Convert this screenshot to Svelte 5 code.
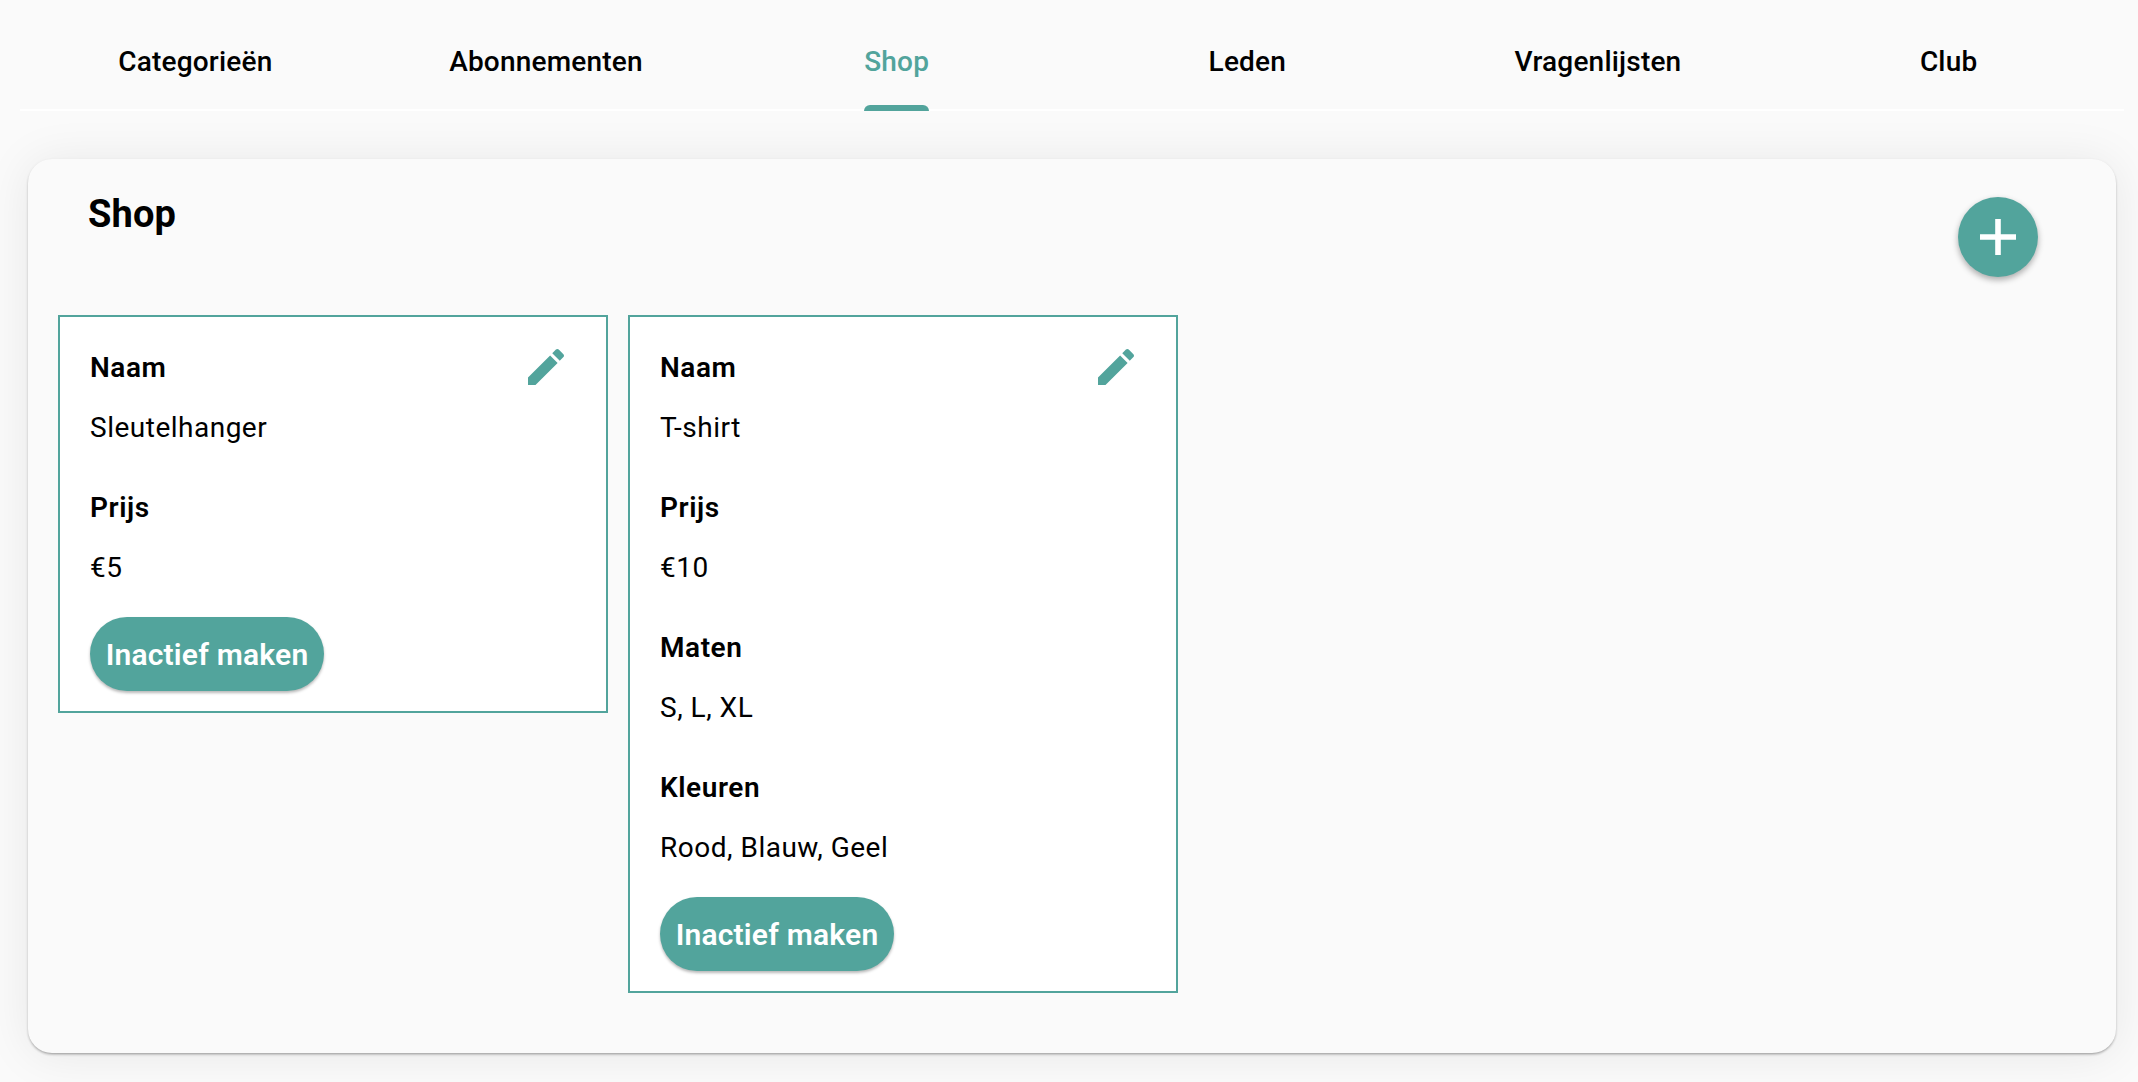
<script lang="ts">
  const tabs = ['Categorieën', 'Abonnementen', 'Shop', 'Leden', 'Vragenlijsten', 'Club'];
  let active = $state('Shop');

  const products = [
    {
      fields: [
        { label: 'Naam', value: 'Sleutelhanger' },
        { label: 'Prijs', value: '€5' },
      ],
    },
    {
      fields: [
        { label: 'Naam', value: 'T-shirt' },
        { label: 'Prijs', value: '€10' },
        { label: 'Maten', value: 'S, L, XL' },
        { label: 'Kleuren', value: 'Rood, Blauw, Geel' },
      ],
    },
  ];
</script>

<div class="page">
  <nav class="tabs">
    {#each tabs as tab}
      <button class="tab" class:active={tab === active} onclick={() => (active = tab)}>
        <span>{tab}</span>
      </button>
    {/each}
  </nav>

  <main class="panel">
    <header class="head">
      <h1>Shop</h1>
      <button class="add" aria-label="Toevoegen">
        <svg viewBox="0 0 36 36"><path d="M15.2 0h5.6v15.2H36v5.6H20.8V36h-5.6V20.8H0v-5.6h15.2z" /></svg>
      </button>
    </header>

    <div class="products">
      {#each products as product}
        <article class="card">
          <button class="edit" aria-label="Bewerken">
            <svg viewBox="0 0 24 24">
              <path d="M3 17.25V21h3.75L17.81 9.94l-3.75-3.75L3 17.25zM20.71 7.04c.39-.39.39-1.02 0-1.41l-2.34-2.34c-.39-.39-1.02-.39-1.41 0l-1.83 1.83 3.75 3.75 1.83-1.83z" />
            </svg>
          </button>
          <dl>
            {#each product.fields as field}
              <div class="field">
                <dt>{field.label}</dt>
                <dd>{field.value}</dd>
              </div>
            {/each}
          </dl>
          <button class="toggle">Inactief maken</button>
        </article>
      {/each}
    </div>
  </main>
</div>

<style>
  :global(body) {
    background: #fafafa;
  }
  .page {
    box-sizing: border-box;
    height: 1082px;
    overflow: hidden;
    padding: 13px 14px 0 20px;
    font-family: Roboto, 'Liberation Sans', sans-serif;
    color: #000;
  }
  button {
    border: 0;
    padding: 0;
    background: none;
    font-family: inherit;
    color: inherit;
  }
  svg {
    display: block;
    fill: currentColor;
  }
  .tabs {
    display: grid;
    grid-template-columns: repeat(6, 1fr);
    height: 98px;
    box-shadow: inset 0 -2px #fff;
  }
  .tab {
    display: flex;
    justify-content: center;
    font-size: 28px;
    font-weight: 500;
    letter-spacing: 0.2px;
  }
  .tab span {
    box-sizing: border-box;
    height: 98px;
    padding-top: 29px;
    line-height: 40px;
  }
  .tab.active {
    color: #52a49c;
  }
  .tab.active span::after {
    content: '';
    display: block;
    height: 6px;
    margin-top: 23px;
    border-radius: 6px 6px 0 0;
    background: #52a49c;
  }
  .panel {
    box-sizing: border-box;
    height: 894px;
    margin: 48px 8px 0;
    padding: 38px 30px 0;
    border-radius: 24px;
    background: #fafafa;
    box-shadow:
      0 2px 3px -1px rgba(0, 0, 0, 0.32),
      0 1px 3px rgba(0, 0, 0, 0.1),
      0 2px 48px rgba(0, 0, 0, 0.08);
  }
  .head {
    display: flex;
    justify-content: space-between;
    align-items: flex-start;
    height: 118px;
    padding: 0 48px 0 30px;
  }
  h1 {
    margin: -7px 0 0;
    font-size: 38px;
    font-weight: 700;
    line-height: 48px;
    letter-spacing: 0.1px;
  }
  .add {
    display: grid;
    place-items: center;
    width: 80px;
    height: 80px;
    border-radius: 50%;
    background: #52a49c;
    color: #fff;
    box-shadow: 0 3px 6px rgba(0, 0, 0, 0.32);
  }
  .add svg {
    width: 36px;
    height: 36px;
  }
  .products {
    display: flex;
    align-items: flex-start;
    gap: 20px;
  }
  .card {
    position: relative;
    box-sizing: border-box;
    width: 550px;
    padding: 31px 30px 20px;
    border: 2px solid #52a49c;
    background: #fff;
  }
  .edit {
    position: absolute;
    top: 26px;
    right: 36px;
  }
  .edit svg {
    width: 48px;
    height: 48px;
    color: #52a49c;
  }
  dl {
    margin: 0;
  }
  .field {
    display: flex;
    flex-direction: column;
    gap: 20px;
    height: 140px;
    font-size: 28px;
    line-height: 40px;
    letter-spacing: 0.5px;
  }
  .field:last-child {
    height: 129px;
  }
  dt {
    font-weight: 600;
    letter-spacing: 0.55px;
  }
  dd {
    margin: 0;
  }
  .toggle {
    display: block;
    width: 234px;
    height: 74px;
    border-radius: 37px;
    background: #52a49c;
    color: #fff;
    font-size: 30px;
    font-weight: 600;
    line-height: 75px;
    letter-spacing: 0.2px;
    white-space: nowrap;
    box-shadow: 0 2px 3px rgba(0, 0, 0, 0.28);
  }
</style>
